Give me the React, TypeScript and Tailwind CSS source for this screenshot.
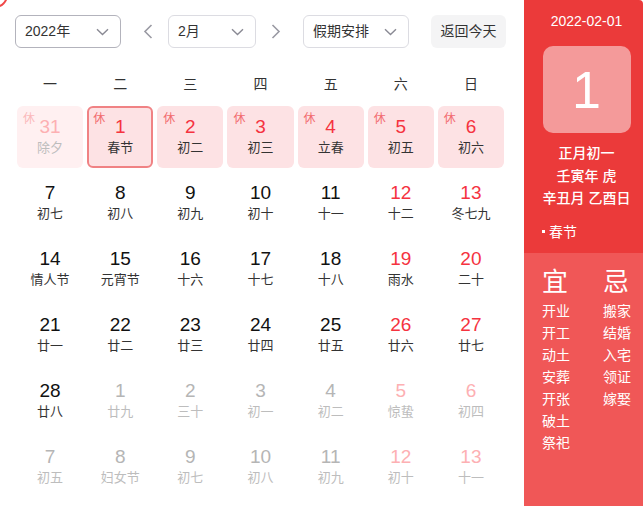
import React from 'react';

type Day = {
  n: number;
  lunar: string;
  red?: boolean;
  faded?: boolean;
  rest?: boolean;
  selected?: boolean;
};

const weeks: Day[][] = [
  [
    { n: 31, lunar: '除夕', faded: true, rest: true, red: true },
    { n: 1, lunar: '春节', rest: true, red: true, selected: true },
    { n: 2, lunar: '初二', rest: true, red: true },
    { n: 3, lunar: '初三', rest: true, red: true },
    { n: 4, lunar: '立春', rest: true, red: true },
    { n: 5, lunar: '初五', rest: true, red: true },
    { n: 6, lunar: '初六', rest: true, red: true },
  ],
  [
    { n: 7, lunar: '初七' },
    { n: 8, lunar: '初八' },
    { n: 9, lunar: '初九' },
    { n: 10, lunar: '初十' },
    { n: 11, lunar: '十一' },
    { n: 12, lunar: '十二', red: true },
    { n: 13, lunar: '冬七九', red: true },
  ],
  [
    { n: 14, lunar: '情人节' },
    { n: 15, lunar: '元宵节' },
    { n: 16, lunar: '十六' },
    { n: 17, lunar: '十七' },
    { n: 18, lunar: '十八' },
    { n: 19, lunar: '雨水', red: true },
    { n: 20, lunar: '二十', red: true },
  ],
  [
    { n: 21, lunar: '廿一' },
    { n: 22, lunar: '廿二' },
    { n: 23, lunar: '廿三' },
    { n: 24, lunar: '廿四' },
    { n: 25, lunar: '廿五' },
    { n: 26, lunar: '廿六', red: true },
    { n: 27, lunar: '廿七', red: true },
  ],
  [
    { n: 28, lunar: '廿八' },
    { n: 1, lunar: '廿九', faded: true },
    { n: 2, lunar: '三十', faded: true },
    { n: 3, lunar: '初一', faded: true },
    { n: 4, lunar: '初二', faded: true },
    { n: 5, lunar: '惊蛰', faded: true, red: true },
    { n: 6, lunar: '初四', faded: true, red: true },
  ],
  [
    { n: 7, lunar: '初五', faded: true },
    { n: 8, lunar: '妇女节', faded: true },
    { n: 9, lunar: '初七', faded: true },
    { n: 10, lunar: '初八', faded: true },
    { n: 11, lunar: '初九', faded: true },
    { n: 12, lunar: '初十', faded: true, red: true },
    { n: 13, lunar: '十一', faded: true, red: true },
  ],
];

const weekdays = ['一', '二', '三', '四', '五', '六', '日'];
const good = ['开业', '开工', '动土', '安葬', '开张', '破土', '祭祀'];
const bad = ['搬家', '结婚', '入宅', '领证', '嫁娶'];

// small "v" used inside the selects
const Caret = () => (
  <svg width="13" height="8" viewBox="0 0 13 8" fill="none">
    <path d="M1 1.2 L6.5 6.5 L12 1.2" stroke="#8a8a94" strokeWidth="1.4" />
  </svg>
);

const Arrow = ({ dir }: { dir: 'left' | 'right' }) => (
  <svg width="10" height="15" viewBox="0 0 10 15" fill="none">
    <path
      d={dir === 'left' ? 'M8.5 1 L2 7.5 L8.5 14' : 'M1.5 1 L8 7.5 L1.5 14'}
      stroke="#9a9aa3"
      strokeWidth="1.6"
    />
  </svg>
);

const Select = ({ label, width, dark }: { label: string; width: string; dark?: boolean }) => (
  <div
    className={`${width} h-[33px] flex items-center justify-between pl-[9px] pr-[11px] rounded-[6px] border bg-white text-[14px] text-[#333] ${
      dark ? 'border-[#b3b3bc]' : 'border-[#dcdce2]'
    }`}
  >
    <span>{label}</span>
    <Caret />
  </div>
);

const DayCell = ({ d }: { d: Day }) => {
  let box = 'bg-white border-2 border-transparent';
  if (d.rest) box = d.faded ? 'bg-[#fff0f1] border-2 border-transparent' : 'bg-[#fde2e4] border-2 border-transparent';
  if (d.selected) box = 'bg-[#fde2e4] border-2 border-[#f08284]';

  let num = 'text-[#111]';
  if (d.red) num = d.faded ? 'text-[#fdb0b3]' : 'text-[#f5333f]';
  else if (d.faded) num = 'text-[#b5b5b5]';

  const lunar = d.faded ? 'text-[#bdbdbd]' : 'text-[#333]';

  return (
    <div className={`relative m-[2px] rounded-[6px] flex flex-col items-center justify-center ${box}`}>
      {d.rest && (
        <span
          className={`absolute left-[4px] top-[4px] text-[12px] leading-[14px] ${
            d.faded ? 'text-[#fbb9bb]' : 'text-[#f26a6e]'
          }`}
        >
          休
        </span>
      )}
      <span className={`text-[19px] leading-[21px] ${num}`}>{d.n}</span>
      <span className={`text-[13px] leading-[21px] ${lunar}`}>{d.lunar}</span>
    </div>
  );
};

export default function App() {
  return (
    <div
      className="relative w-[643px] h-[506px] overflow-hidden bg-white flex"
      style={{ fontFamily: '"Liberation Sans", "Noto Sans CJK SC", sans-serif' }}
    >
      {/* corner of the outer frame peeking in */}
      <div className="absolute left-[-18px] top-[-18px] w-[26px] h-[26px] rounded-full border-2 border-[#f04848]" />

      <div className="w-[524px] pl-[15px] pr-[18px]">
        <div className="flex items-center pt-[15px]">
          <Select label="2022年" width="w-[106px]" dark />
          <div className="ml-[21px] w-[12px] flex justify-center">
            <Arrow dir="left" />
          </div>
          <div className="ml-[14px]">
            <Select label="2月" width="w-[88px]" />
          </div>
          <div className="ml-[14px] w-[12px] flex justify-center">
            <Arrow dir="right" />
          </div>
          <div className="ml-[21px]">
            <Select label="假期安排" width="w-[106px]" />
          </div>
          <button className="ml-[22px] w-[75px] h-[33px] rounded-[6px] bg-[#f4f4f5] text-[14px] text-[#333]">
            返回今天
          </button>
        </div>

        <div className="grid grid-cols-7 mt-[16px] h-[40px] items-center text-[14px] text-[#333]">
          {weekdays.map((w) => (
            <div key={w} className="text-center">
              {w}
            </div>
          ))}
        </div>

        <div className="grid grid-cols-7 auto-rows-[66px]">
          {weeks.flat().map((d, i) => (
            <DayCell key={i} d={d} />
          ))}
        </div>
      </div>

      <div className="w-[119px] h-full flex flex-col text-white rounded-tr-[4px] overflow-hidden">
        <div className="bg-[#eb3a3a] h-[253px] pl-[6px] flex flex-col items-center pt-[12px]">
          <div className="text-[14px] leading-[18px]">2022-02-01</div>
          <div className="mt-[16px] w-[88px] h-[87px] rounded-[10px] bg-[#f49a9a] flex items-center justify-center text-[52px] leading-none">
            1
          </div>
          <div className="mt-[9px] text-[14px] leading-[22.5px] font-medium text-center">
            <div>正月初一</div>
            <div>壬寅年 虎</div>
            <div>辛丑月 乙酉日</div>
          </div>
          <div className="self-start ml-[12px] mt-[12px] flex items-center text-[14px] leading-[20px]">
            <span className="w-[3px] h-[3px] bg-white mr-[4px]" />
            春节
          </div>
        </div>
        <div className="flex-1 bg-[#f05757] flex pl-[18px] pt-[14px]">
          <div className="w-[61px]">
            <div className="text-[26px] leading-[30px]">宜</div>
            <div className="mt-[3px] text-[14px] leading-[22px]">
              {good.map((g) => (
                <div key={g}>{g}</div>
              ))}
            </div>
          </div>
          <div>
            <div className="text-[26px] leading-[30px]">忌</div>
            <div className="mt-[3px] text-[14px] leading-[22px]">
              {bad.map((b) => (
                <div key={b}>{b}</div>
              ))}
            </div>
          </div>
        </div>
      </div>
    </div>
  );
}
